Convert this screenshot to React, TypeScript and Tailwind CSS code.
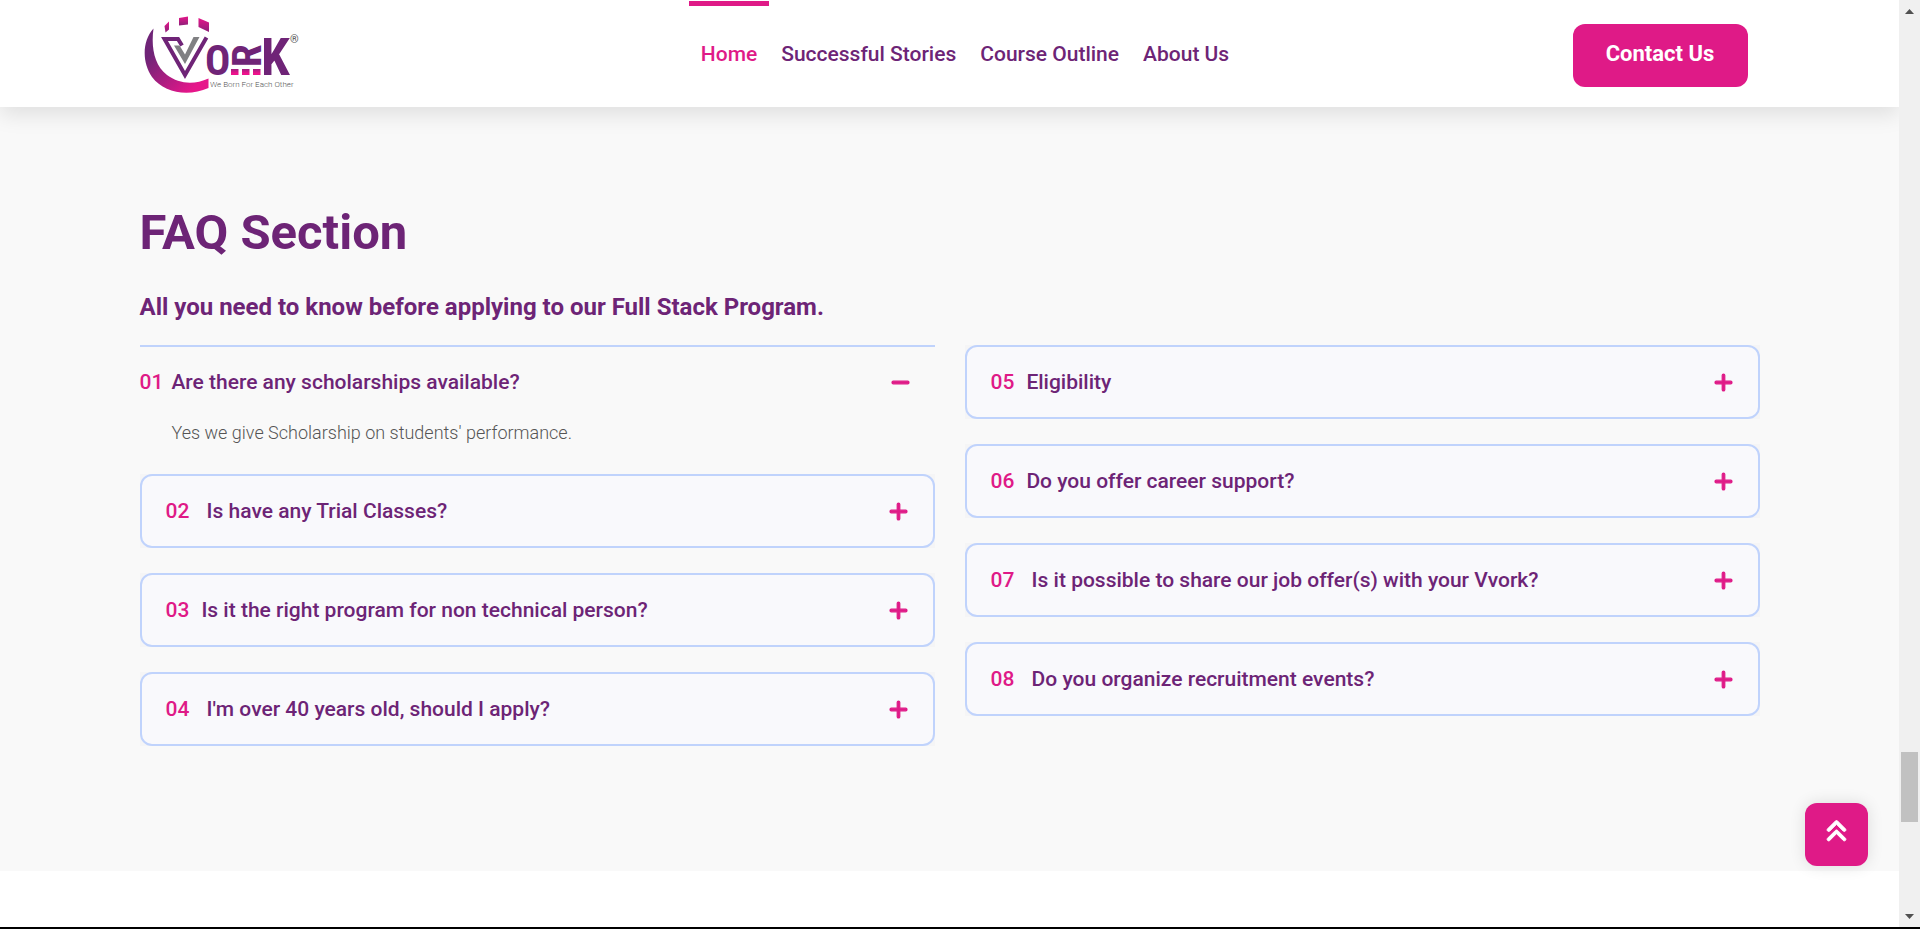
import React, { useState } from "react";
import { FaAnglesUp, FaMinus, FaPlus } from "react-icons/fa6";

interface Faq {
  number: string;
  question: string;
  answer: string;
}

const leftFaqs: Faq[] = [
  {
    number: "01",
    question: "Are there any scholarships available?",
    answer: "Yes we give Scholarship on students' performance.",
  },
  { number: "02", question: "\u00a0Is have any Trial Classes?", answer: "" },
  { number: "03", question: "Is it the right program for non technical person?", answer: "" },
  { number: "04", question: "\u00a0I'm over 40 years old, should I apply?", answer: "" },
];

const rightFaqs: Faq[] = [
  { number: "05", question: "Eligibility", answer: "" },
  { number: "06", question: "Do you offer career support?", answer: "" },
  {
    number: "07",
    question: "\u00a0Is it possible to share our job offer(s) with your Vvork?",
    answer: "",
  },
  { number: "08", question: "\u00a0Do you organize recruitment events?", answer: "" },
];

const navLinks = ["Home", "Successful Stories", "Course Outline", "About Us"];

function Logo() {
  return (
    <svg viewBox="140 11 170 84" className="h-[84px] w-[170px]" role="img" aria-label="Vvork">
      <defs>
        <linearGradient id="arc" x1="0" y1="0" x2="1" y2="1">
          <stop offset="0.25" stopColor="#6f2477" />
          <stop offset="0.85" stopColor="#e6168a" />
        </linearGradient>
        <linearGradient id="block" x1="0" y1="0" x2="0" y2="1">
          <stop offset="0" stopColor="#e6168a" />
          <stop offset="1" stopColor="#8c2079" />
        </linearGradient>
        <linearGradient id="square" x1="0" y1="0" x2="0" y2="1">
          <stop offset="0" stopColor="#a01f80" />
          <stop offset="0.7" stopColor="#ee128c" />
        </linearGradient>
      </defs>
      <path
        d="M153.500 27.500C142 40 142 62 152 76C164 92 188 96 208.500 87V77.500C194 84 179 83 167 74C154 64 151 46 153.500 27.500Z"
        fill="url(#arc)"
      />
      <path d="M164.500 25L169 20.500V28.500L165.500 31.500Z" fill="url(#block)" />
      <path d="M179 17L188 15.500V23.500L179 24.500Z" fill="url(#block)" />
      <path d="M198.500 17L209 21.500V31L198.500 26Z" fill="url(#block)" />
      <path
        d="M182 44.500L178 38H164.500L185 74L206.500 36.500"
        fill="none"
        stroke="#6f2477"
        strokeWidth="4"
      />
      <path d="M174 44.500H179.500L185 53.500L193.500 36H199.500L185 63Z" fill="#808083" />
      <text x="205" y="73.500" fontSize="42" fontWeight="700" fontFamily="Roboto Condensed, Roboto, sans-serif" fill="#6f2477">
        O
      </text>
      <text x="261" y="73.500" fontSize="52" fontWeight="700" fontFamily="Roboto Condensed, Roboto, sans-serif" fill="#6f2477">
        K
      </text>
      <text
        transform="translate(260.500 66) rotate(-90)"
        fontSize="41"
        fontWeight="700"
        fontFamily="Roboto Condensed, Roboto, sans-serif"
        fill="#6f2477"
      >
        R
      </text>
      <path d="M231 68H238.500V74H231ZM242 68H249.500V74H242ZM253 68H260.500V74H253Z" fill="url(#square)" />
      <text x="290" y="42" fontSize="11" fontFamily="Roboto, sans-serif" fill="#555">
        ®
      </text>
      <text x="210" y="86" fontSize="8" fontWeight="300" fontFamily="Roboto, sans-serif" fill="#555">
        We Born For Each Other
      </text>
    </svg>
  );
}

function Header() {
  return (
    <header className="relative z-10 bg-white shadow-[0_8px_20px_rgba(0,0,0,0.1)]">
      <div className="mx-auto flex h-[107px] max-w-[1620px] items-center pr-3">
        <a href="#home" className="w-[218px] shrink-0">
          <Logo />
        </a>
        <nav className="flex flex-1 justify-center self-stretch">
          {navLinks.map((link, i) => (
            <a
              key={link}
              href={"#" + link.toLowerCase().replace(" ", "-")}
              className={
                i === 0
                  ? "mt-px flex items-center border-t-[5px] border-[#df1a87] px-3 pb-1 text-[21px] font-medium text-[#df1a87]"
                  : "flex items-center px-3 pt-0.5 text-[21px] font-medium text-[#6d2476]"
              }
            >
              {link}
            </a>
          ))}
        </nav>
        <a
          href="#contact"
          className="mt-1 flex h-[63px] w-[175px] items-center justify-center rounded-xl bg-[#df1a87] pb-1 text-[22px] font-bold text-white"
        >
          Contact Us
        </a>
      </div>
    </header>
  );
}

interface ItemProps {
  faq: Faq;
  open: boolean;
  onToggle: () => void;
}

function FaqItem({ faq, open, onToggle }: ItemProps) {
  const Icon = open ? FaMinus : FaPlus;
  return (
    <div className={open ? "border-t-2 border-[#c0d3fc]" : "bg-[#f5f5f6]"}>
      <h3>
        <button
          type="button"
          aria-expanded={open}
          onClick={onToggle}
          className={
            open
              ? "flex h-[70px] w-full cursor-pointer items-center gap-2 pr-6 text-left text-[21px] font-medium"
              : "flex h-[74px] w-full cursor-pointer items-center gap-3 rounded-xl border-2 border-[#c0d3fc] bg-[#f9f9fc] px-6 text-left text-[21px] font-medium"
          }
        >
          <span className="pt-0.5 text-[#df1a87]">{faq.number}</span>
          <span className="flex-1 pt-0.5 text-[#6d2476]">{faq.question}</span>
          <Icon className="size-[21px] stroke-current stroke-[28px] text-[#df1a87]" />
        </button>
      </h3>
      {open && <p className="min-h-8 pl-8 text-[18px] leading-8 font-light text-[#555]">{faq.answer}</p>}
    </div>
  );
}

export default function App() {
  const [openItem, setOpenItem] = useState("01");

  const renderColumn = (faqs: Faq[]) => (
    <div className="flex flex-col gap-[25px]">
      {faqs.map((faq) => (
        <FaqItem
          key={faq.number}
          faq={faq}
          open={openItem === faq.number}
          onToggle={() => setOpenItem(openItem === faq.number ? "" : faq.number)}
        />
      ))}
    </div>
  );

  return (
    <div className="flex min-h-screen flex-col border-b-2 border-black bg-white font-['Roboto',sans-serif]">
      <div className="flex flex-1">
        <div className="relative min-w-0 flex-1 overflow-hidden">
          <Header />
          <main className="bg-[#f9f9f9] pt-24 pb-[125px] text-[#6d2476]">
            <div className="mx-auto max-w-[1620px]">
              <h1 className="text-[49px] leading-[60px] font-bold">FAQ Section</h1>
              <h2 className="mt-[26px] text-[24px] leading-9 font-bold">
                All you need to know before applying to our Full Stack Program.
              </h2>
              <div className="mt-5 grid items-start gap-x-[30px] gap-y-[25px] lg:grid-cols-2">
                {renderColumn(leftFaqs)}
                {renderColumn(rightFaqs)}
              </div>
            </div>
          </main>
          <button
            type="button"
            aria-label="Back to top"
            className="absolute right-[31px] bottom-[61px] flex size-[63px] cursor-pointer items-center justify-center rounded-xl bg-[#df1a87] pb-1.5 text-white shadow-[0_0_16px_rgba(0,0,0,0.12)]"
          >
            <FaAnglesUp className="size-[25px] stroke-current stroke-[20px]" />
          </button>
        </div>
        <div aria-hidden="true" className="flex w-[21px] flex-col items-center bg-[#f0f0f0] pt-[9px] pb-2">
          <svg viewBox="0 0 9 5" className="h-[5px] w-[9px]">
            <path d="M0 5L4.500 0L9 5Z" fill="#505050" />
          </svg>
          <div className="grow-[738]" />
          <div className="h-[70px] w-[17px] bg-[#c1c1c1]" />
          <div className="grow-[92]" />
          <svg viewBox="0 0 9 5" className="h-[5px] w-[9px]">
            <path d="M0 0L4.500 5L9 0Z" fill="#505050" />
          </svg>
        </div>
      </div>
    </div>
  );
}
